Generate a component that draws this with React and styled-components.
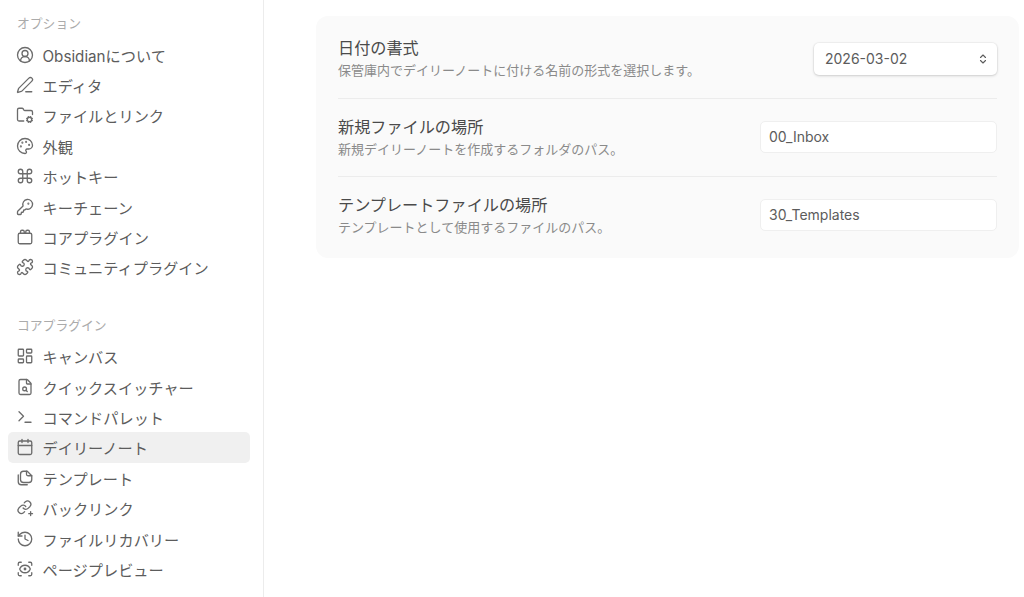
import React from 'react';
import styled, { createGlobalStyle } from 'styled-components';
import {
  CircleUserRound,
  PenLine,
  FolderCog,
  Palette,
  Command,
  KeyRound,
  Puzzle,
  LayoutDashboard,
  FileSearch,
  Terminal,
  Calendar,
  History,
  ScanEye,
  ChevronsUpDown,
} from 'lucide-react';

const GlobalStyle = createGlobalStyle`
  html, body {
    margin: 0;
    height: 100%;
    background: #fff;
    overflow: hidden;
    font-family: Inter, "Noto Sans CJK JP", sans-serif;
  }
  #root { height: 100%; }
`;

const Page = styled.div`
  display: flex;
  height: 597px;
`;

const Sidebar = styled.nav`
  flex: 0 0 264px;
  box-sizing: border-box;
  padding: 14px 13px 0 8px;
  border-right: 1px solid #ececec;
`;

const SectionLabel = styled.div`
  height: 20px;
  line-height: 20px;
  padding-left: 9px;
  margin-top: ${(p) => (p.$first ? '0' : '33.8px')};
  margin-bottom: ${(p) => (p.$first ? '5.4px' : '4.8px')};
  font-size: 12.8px;
  color: #ababab;
`;

const NavItem = styled.div`
  display: flex;
  align-items: center;
  gap: 8.5px;
  height: 30.4px;
  padding-left: 8px;
  border-radius: 5px;
  font-size: 15.2px;
  color: #5c5c5c;
  background: ${(p) => (p.$active ? '#f0f0f0' : 'transparent')};

  svg {
    flex: none;
    width: 18px;
    height: 18px;
    color: #6b6b6b;
    stroke-width: 1.75;
  }
`;

const Main = styled.main`
  flex: 1;
  padding: 16px 5px 0 52px;
`;

const Card = styled.section`
  padding: 4px 22px;
  border-radius: 12px;
  background: #fafafa;
`;

const Row = styled.div`
  display: flex;
  align-items: center;
  justify-content: space-between;
  height: 78px;
  padding-bottom: 1px;
  box-sizing: border-box;
  border-top: ${(p) => (p.$first ? 'none' : '1px solid #ececec')};
`;

const Info = styled.div`
  display: flex;
  flex-direction: column;
`;

const Name = styled.div`
  font-size: 16.15px;
  line-height: 24px;
  color: #4a4a4a;
`;

const Description = styled.div`
  font-size: 13px;
  line-height: 21px;
  color: #8a8a8a;
`;

const TextField = styled.div`
  box-sizing: border-box;
  width: 237px;
  height: 32px;
  padding: 0 8px;
  line-height: 30px;
  font-size: 14px;
  color: #5c5c5c;
  background: #fff;
  border: 1px solid #efefef;
  border-radius: 5px;
`;

const Dropdown = styled.div`
  display: flex;
  align-items: center;
  justify-content: space-between;
  box-sizing: border-box;
  width: 183px;
  height: 32px;
  padding: 0 8px 0 11px;
  font-size: 14px;
  color: #5c5c5c;
  background: #fff;
  border-radius: 5px;
  box-shadow: 0 1px 3px rgba(0, 0, 0, 0.16), 0 0 0 1px rgba(0, 0, 0, 0.03);

  svg {
    width: 12px;
    height: 12px;
    color: #5c5c5c;
    stroke-width: 2.2;
  }
`;

// icons lucide has no close match for
const LineIcon = ({ children }) => (
  <svg
    viewBox="0 0 24 24"
    fill="none"
    stroke="currentColor"
    strokeLinecap="round"
    strokeLinejoin="round"
  >
    {children}
  </svg>
);

const BlocksIcon = () => (
  <LineIcon>
    <rect x="3" y="7" width="18" height="14" rx="2" />
    <path d="M6 7V5a2 2 0 0 1 2-2h1a2 2 0 0 1 2 2v2" />
    <path d="M13 7V5a2 2 0 0 1 2-2h1a2 2 0 0 1 2 2v2" />
  </LineIcon>
);

const TemplateIcon = () => (
  <LineIcon>
    <path d="M10 3h5l6 6v5a4 4 0 0 1-4 4h-7a4 4 0 0 1-4-4V7a4 4 0 0 1 4-4" />
    <path d="M14 3v4a2 2 0 0 0 2 2h5" />
    <path d="M3 8v9a4 4 0 0 0 4 4h8" />
  </LineIcon>
);

const BacklinkIcon = () => (
  <LineIcon>
    <path d="M9.5 12a4.4 4.4 0 0 0 6.6.5l2.6-2.6a4.4 4.4 0 0 0-6.2-6.2l-1.5 1.5" />
    <path d="M13 10a4.4 4.4 0 0 0-6.6-.5l-2.6 2.6a4.4 4.4 0 0 0 6.2 6.2l1.5-1.5" />
    <path d="M19.5 17v5" />
    <path d="M17 19.5h5" />
  </LineIcon>
);

const optionItems = [
  { icon: CircleUserRound, label: 'Obsidianについて' },
  { icon: PenLine, label: 'エディタ' },
  { icon: FolderCog, label: 'ファイルとリンク' },
  { icon: Palette, label: '外観' },
  { icon: Command, label: 'ホットキー' },
  { icon: KeyRound, label: 'キーチェーン' },
  { icon: BlocksIcon, label: 'コアプラグイン' },
  { icon: Puzzle, label: 'コミュニティプラグイン' },
];

const pluginItems = [
  { icon: LayoutDashboard, label: 'キャンバス' },
  { icon: FileSearch, label: 'クイックスイッチャー' },
  { icon: Terminal, label: 'コマンドパレット' },
  { icon: Calendar, label: 'デイリーノート', active: true },
  { icon: TemplateIcon, label: 'テンプレート' },
  { icon: BacklinkIcon, label: 'バックリンク' },
  { icon: History, label: 'ファイルリカバリー' },
  { icon: ScanEye, label: 'ページプレビュー' },
];

function NavList({ items }) {
  return items.map(({ icon: Icon, label, active }) => (
    <NavItem key={label} $active={active}>
      <Icon />
      {label}
    </NavItem>
  ));
}

export default function App() {
  return (
    <Page>
      <GlobalStyle />
      <Sidebar>
        <SectionLabel $first>オプション</SectionLabel>
        <NavList items={optionItems} />
        <SectionLabel>コアプラグイン</SectionLabel>
        <NavList items={pluginItems} />
      </Sidebar>
      <Main>
        <Card>
          <Row $first>
            <Info>
              <Name>日付の書式</Name>
              <Description>保管庫内でデイリーノートに付ける名前の形式を選択します。</Description>
            </Info>
            <Dropdown>
              2026-03-02
              <ChevronsUpDown />
            </Dropdown>
          </Row>
          <Row>
            <Info>
              <Name>新規ファイルの場所</Name>
              <Description>新規デイリーノートを作成するフォルダのパス。</Description>
            </Info>
            <TextField>00_Inbox</TextField>
          </Row>
          <Row>
            <Info>
              <Name>テンプレートファイルの場所</Name>
              <Description>テンプレートとして使用するファイルのパス。</Description>
            </Info>
            <TextField>30_Templates</TextField>
          </Row>
        </Card>
      </Main>
    </Page>
  );
}
